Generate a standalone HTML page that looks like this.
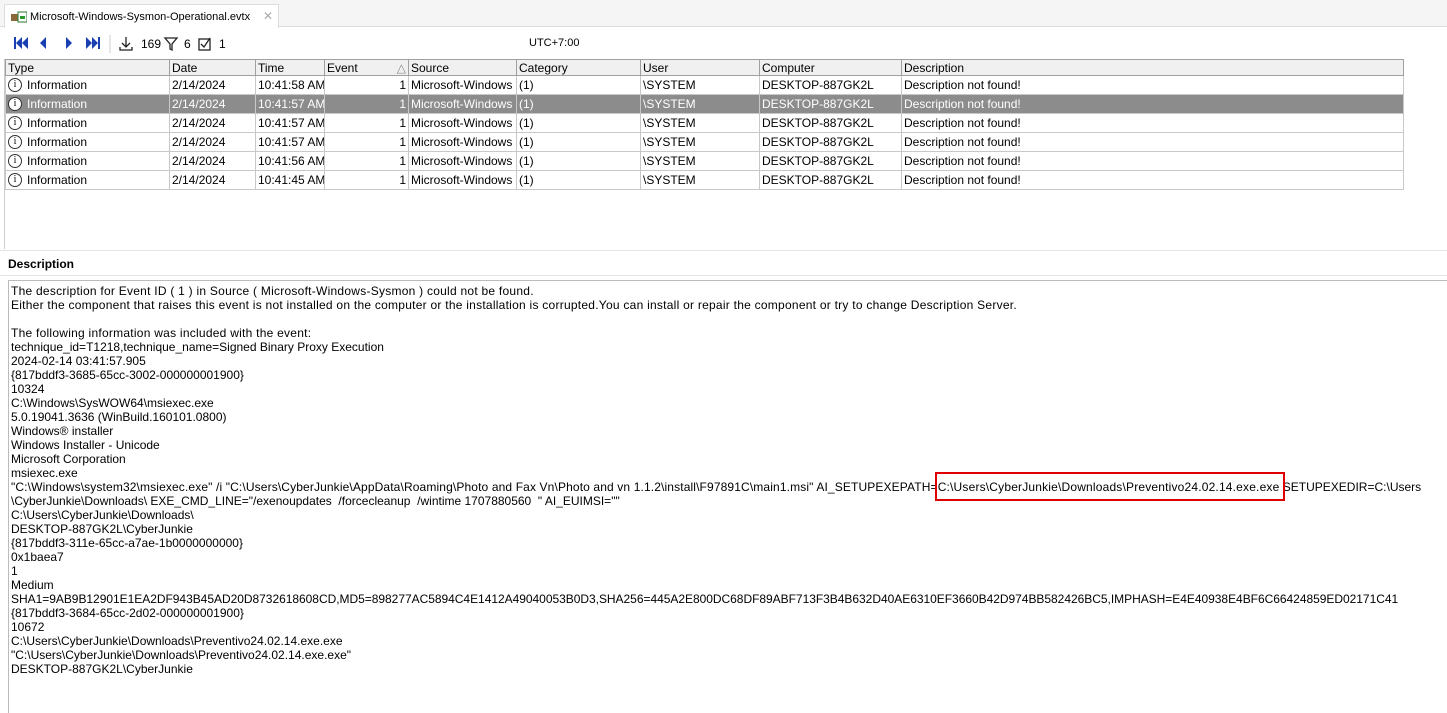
<!DOCTYPE html>
<html><head><style>
*{margin:0;padding:0;box-sizing:border-box}
body{width:1447px;height:713px;overflow:hidden;background:#fff;font-family:"Liberation Sans",sans-serif;font-size:12px;color:#000;position:relative}
.abs{position:absolute}
.tabbar{left:0;top:0;width:1447px;height:27px;background:#f5f5f5;border-bottom:1px solid #ddd}
.tab{left:4px;top:4px;width:275px;height:24px;background:#fff;border:1px solid #ddd;border-bottom:none}
.tab span{position:absolute;left:25px;top:6px;font-size:11px}
.tab .x{left:258px;top:4px;color:#aaa;font-size:12px}
table{border-collapse:collapse;position:absolute;left:5px;top:59px;table-layout:fixed;width:1398px}
td{height:19px;border:1px solid #c8c8c8;padding:0 2px;white-space:nowrap;overflow:hidden;font-size:12px;line-height:17px;vertical-align:middle}
tr.h td{height:16px;line-height:14px;border-color:#a0a0a0}
tr.sel td{background:#8c8c8c;color:#fff}
.num{text-align:right}
.ic{display:inline-block;width:14px;height:14px;border:1px solid #333;border-radius:50%;font-size:10px;line-height:12px;text-align:center;vertical-align:top;margin:1px 5px 0 0;font-family:"Liberation Serif",serif;background:#fff;color:#000}
.desc{left:8px;top:280px;width:1439px;height:433px;border:1px solid #bbb;border-right:none;border-bottom:none}
.txt{left:11px;top:284px;line-height:14px;white-space:pre;font-size:12px}
</style></head><body>
<div class="abs tabbar"></div>
<div class="abs tab"><svg class="abs" style="left:6px;top:6px" width="16" height="12"><rect x="0" y="3" width="8" height="7" fill="#8a6a3a"/><rect x="7" y="1" width="9" height="10" fill="#fff" stroke="#2a7a2a"/><rect x="9" y="5" width="5" height="3" fill="#2a9a2a"/></svg><span>Microsoft-Windows-Sysmon-Operational.evtx</span><span class="x">✕</span></div>
<svg class="abs" style="left:12px;top:35px" width="230" height="18">
<g fill="#1a3fb0"><polygon points="2,2 2,14 4,14 4,2"/><polygon points="10,2 4,8 10,14"/><polygon points="16,2 10,8 16,14"/>
<polygon points="34,2 28,8 34,14"/><polygon points="54,2 60,8 54,14"/>
<polygon points="74,2 80,8 74,14"/><polygon points="80,2 86,8 80,14"/><rect x="86" y="2" width="2" height="12"/></g>
<line x1="98" y1="0" x2="98" y2="18" stroke="#ccc"/>
<g stroke="#222" fill="none" stroke-width="1.3"><path d="M114 2v10M110 8l4 4 4-4M108 12v3h12v-3"/>
<path d="M153 3h12l-5 6v6l-2-1v-5z"/><rect x="187" y="4" width="11" height="11"/><path d="M189 9l3 3 6-9"/></g>
<text x="129" y="13" font-family="Liberation Sans" font-size="12">169</text>
<text x="172" y="13" font-family="Liberation Sans" font-size="12">6</text>
<text x="207" y="13" font-family="Liberation Sans" font-size="12">1</text>
</svg>
<div class="abs" style="left:529px;top:37px;font-size:11px">UTC+7:00</div>
<div class="abs" style="left:5px;top:59px;width:1398px;height:17px;background:#f0f0f0"></div>
<table>
<colgroup><col style="width:164px"><col style="width:86px"><col style="width:69px"><col style="width:84px"><col style="width:108px"><col style="width:124px"><col style="width:119px"><col style="width:142px"><col style="width:502px"></colgroup>
<tr class="h"><td>Type</td><td>Date</td><td>Time</td><td>Event<span style="float:right;color:#888">△</span></td><td>Source</td><td>Category</td><td>User</td><td>Computer</td><td>Description</td></tr>
<tr><td><span class="ic">i</span>Information</td><td>2/14/2024</td><td>10:41:58 AM</td><td class="num">1</td><td>Microsoft-Windows</td><td>(1)</td><td>\SYSTEM</td><td>DESKTOP-887GK2L</td><td>Description not found!</td></tr>
<tr class="sel"><td><span class="ic">i</span>Information</td><td>2/14/2024</td><td>10:41:57 AM</td><td class="num">1</td><td>Microsoft-Windows</td><td>(1)</td><td>\SYSTEM</td><td>DESKTOP-887GK2L</td><td>Description not found!</td></tr>
<tr><td><span class="ic">i</span>Information</td><td>2/14/2024</td><td>10:41:57 AM</td><td class="num">1</td><td>Microsoft-Windows</td><td>(1)</td><td>\SYSTEM</td><td>DESKTOP-887GK2L</td><td>Description not found!</td></tr>
<tr><td><span class="ic">i</span>Information</td><td>2/14/2024</td><td>10:41:57 AM</td><td class="num">1</td><td>Microsoft-Windows</td><td>(1)</td><td>\SYSTEM</td><td>DESKTOP-887GK2L</td><td>Description not found!</td></tr>
<tr><td><span class="ic">i</span>Information</td><td>2/14/2024</td><td>10:41:56 AM</td><td class="num">1</td><td>Microsoft-Windows</td><td>(1)</td><td>\SYSTEM</td><td>DESKTOP-887GK2L</td><td>Description not found!</td></tr>
<tr><td><span class="ic">i</span>Information</td><td>2/14/2024</td><td>10:41:45 AM</td><td class="num">1</td><td>Microsoft-Windows</td><td>(1)</td><td>\SYSTEM</td><td>DESKTOP-887GK2L</td><td>Description not found!</td></tr>
</table>
<div class="abs" style="left:4px;top:59px;width:1px;height:190px;background:#ccc"></div>
<div class="abs" style="left:0;top:250px;width:1447px;height:1px;background:#e4e4e4"></div>
<div class="abs" style="left:8px;top:257px;font-weight:bold;font-size:12px">Description</div>
<div class="abs" style="left:0;top:275px;width:1447px;height:1px;background:#e4e4e4"></div>
<div class="abs desc"></div>
<div class="abs txt"><span style="letter-spacing:0.25px">The description for Event ID ( 1 ) in Source ( Microsoft-Windows-Sysmon ) could not be found.
Either the component that raises this event is not installed on the computer or the installation is corrupted.You can install or repair the component or try to change Description Server.

The following information was included with the event:</span>
technique_id=T1218,technique_name=Signed Binary Proxy Execution
2024-02-14 03:41:57.905
{817bddf3-3685-65cc-3002-000000001900}
10324
C:\Windows\SysWOW64\msiexec.exe
5.0.19041.3636 (WinBuild.160101.0800)
Windows® installer
Windows Installer - Unicode
Microsoft Corporation
msiexec.exe
<span style="letter-spacing:0.13px">"C:\Windows\system32\msiexec.exe" /i "C:\Users\CyberJunkie\AppData\Roaming\Photo and Fax Vn\Photo and vn 1.1.2\install\F97891C\main1.msi" AI_SETUPEXEPATH=</span><span style="letter-spacing:0.18px">C:\Users\CyberJunkie\Downloads\Preventivo24.02.14.exe.exe</span> SETUPEXEDIR=C:\Users
\CyberJunkie\Downloads\ EXE_CMD_LINE="/exenoupdates  /forcecleanup  /wintime 1707880560  " AI_EUIMSI=""
C:\Users\CyberJunkie\Downloads\
DESKTOP-887GK2L\CyberJunkie
{817bddf3-311e-65cc-a7ae-1b0000000000}
0x1baea7
1
Medium
<span style="letter-spacing:-0.03px">SHA1=9AB9B12901E1EA2DF943B45AD20D8732618608CD,MD5=898277AC5894C4E1412A49040053B0D3,SHA256=445A2E800DC68DF89ABF713F3B4B632D40AE6310EF3660B42D974BB582426BC5,IMPHASH=E4E40938E4BF6C66424859ED02171C41</span>
{817bddf3-3684-65cc-2d02-000000001900}
10672
C:\Users\CyberJunkie\Downloads\Preventivo24.02.14.exe.exe
"C:\Users\CyberJunkie\Downloads\Preventivo24.02.14.exe.exe"
DESKTOP-887GK2L\CyberJunkie</div>
<div class="abs" style="left:935px;top:472px;width:350px;height:29px;border:2px solid #e00000"></div>
</body></html>
